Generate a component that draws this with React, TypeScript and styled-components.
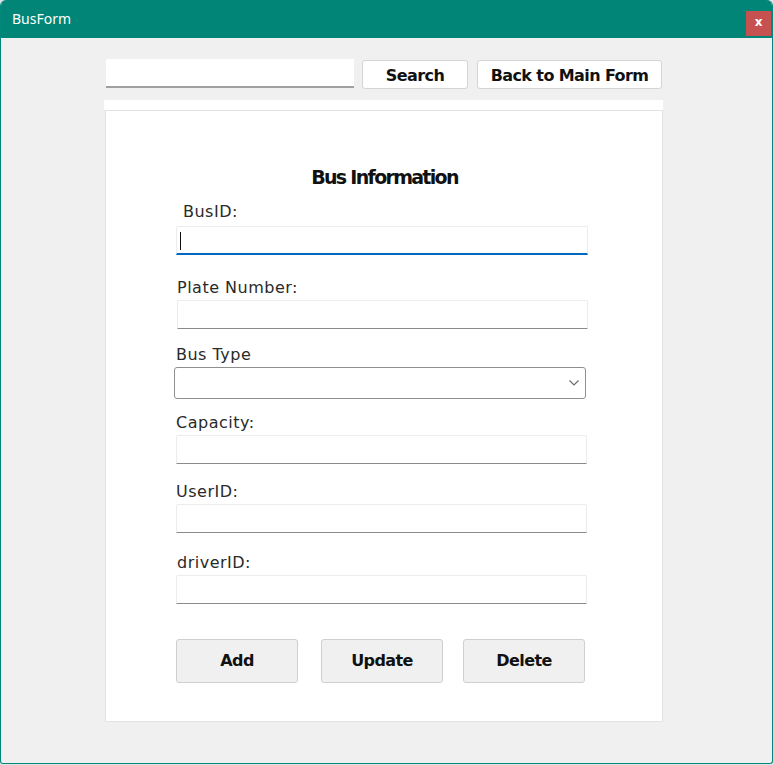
import React from "react";
import styled, { createGlobalStyle } from "styled-components";

const Global = createGlobalStyle`
  html, body { margin: 0; padding: 0; background: #dfe3e6; }
  body { width: 773px; height: 765px; overflow: hidden; }
  * { box-sizing: border-box; }
`;

const Window = styled.div`
  width: 773px;
  height: 764px;
  display: flex;
  flex-direction: column;
  background: #f0f0f0;
  border: 1px solid #00897a;
  border-top: none;
  border-radius: 6px 6px 3px 3px;
  overflow: hidden;
`;

const TitleBar = styled.div`
  height: 38px;
  flex: none;
  background: #008576;
  display: flex;
  align-items: center;
  justify-content: space-between;
  padding: 0 1px 0 11px;
`;

const Title = styled.span`
  color: #ffffff;
  font-family: "Noto Sans", sans-serif;
  font-size: 14px;
  margin-top: -1px;
`;

const CloseButton = styled.button`
  width: 25px;
  height: 25px;
  margin-top: 8px;
  background: #c75050;
  border: none;
  color: #ffffff;
  font-family: "DejaVu Sans", sans-serif;
  font-size: 12px;
  font-weight: bold;
  padding: 0 0 2px 0;
  display: flex;
  align-items: center;
  justify-content: center;
`;

const Body = styled.div`
  flex: 1;
  padding: 21px 0 0 103px;
  display: flex;
  flex-direction: column;
`;

const Toolbar = styled.div`
  display: flex;
  align-items: flex-start;
  height: 29px;
  padding-left: 2px;
`;

const SearchInput = styled.input`
  width: 248px;
  height: 29px;
  background: #ffffff;
  border: none;
  border-bottom: 2px solid #a0a0a0;
  outline: none;
  margin-right: 8px;
`;

const ToolButton = styled.button<{ $w: number; $gap?: number }>`
  width: ${(p) => p.$w}px;
  height: 29px;
  margin-top: 1px;
  margin-right: ${(p) => p.$gap ?? 0}px;
  background: #ffffff;
  border: 1px solid #d4d4d4;
  border-radius: 3px;
  font-family: "DejaVu Sans", sans-serif;
  font-weight: bold;
  font-size: 16px;
  letter-spacing: -0.6px;
  color: #111111;
  padding: 1px 0 0 0;
  display: flex;
  align-items: center;
  justify-content: center;
`;

const Strip = styled.div`
  width: 559px;
  height: 10px;
  margin-top: 12px;
  background: #ffffff;
`;

const Panel = styled.div`
  width: 558px;
  height: 612px;
  margin-left: 1px;
  background: #ffffff;
  border: 1px solid #e3e3e3;
  display: flex;
  flex-direction: column;
  padding: 54px 0 0 69px;
`;

const Heading = styled.h2`
  margin: 0 0 0 4px;
  width: 411px;
  text-align: center;
  font-family: "DejaVu Sans", sans-serif;
  font-weight: bold;
  font-size: 19px;
  letter-spacing: -1.7px;
  color: #111111;
  line-height: 24px;
`;

const Field = styled.div<{ $top: number }>`
  display: flex;
  flex-direction: column;
  margin-top: ${(p) => p.$top}px;
`;

const Label = styled.label<{ $indent: number; $gap: number }>`
  font-family: "DejaVu Sans", sans-serif;
  font-size: 16px;
  letter-spacing: 0.5px;
  line-height: 19px;
  color: #2a2a2a;
  padding-left: ${(p) => p.$indent}px;
  margin-bottom: ${(p) => p.$gap}px;
`;

const TextBox = styled.div<{ $focused?: boolean; $h: number; $x: number; $w: number }>`
  position: relative;
  width: ${(p) => p.$w}px;
  height: ${(p) => p.$h}px;
  margin-left: ${(p) => p.$x}px;
  background: #ffffff;
  border: 1px solid #ececec;
  border-bottom: ${(p) => (p.$focused ? "2px solid #0067c0" : "1px solid #8a8a8a")};
  border-radius: 2px 2px 0 0;
`;

const Caret = styled.span`
  position: absolute;
  left: 3px;
  top: 5px;
  width: 1px;
  height: 18px;
  background: #111111;
`;

const SelectBox = styled.div`
  width: 412px;
  height: 32px;
  margin-left: -1px;
  background: #ffffff;
  border: 1px solid #8f8f8f;
  border-radius: 3px;
  display: flex;
  align-items: center;
  justify-content: flex-end;
  padding-right: 5px;
`;

const ButtonRow = styled.div`
  display: flex;
  margin-top: 35px;
  margin-left: 1px;
`;

const ActionButton = styled.button<{ $gap: number }>`
  width: 122px;
  height: 44px;
  margin-right: ${(p) => p.$gap}px;
  background: #f0f0f0;
  border: 1px solid #cfcfcf;
  border-radius: 3px;
  font-family: "DejaVu Sans", sans-serif;
  font-weight: bold;
  font-size: 16px;
  letter-spacing: -0.6px;
  color: #111111;
  padding: 0 0 2px 0;
`;

type FieldDef = {
  label: string;
  top: number;
  indent: number;
  gap: number;
  h: number;
  x: number;
  w: number;
  focused?: boolean;
  select?: boolean;
};

const fields: FieldDef[] = [
  { label: "BusID:", top: 13, indent: 8, gap: 5, h: 29, x: 1, w: 412, focused: true },
  { label: "Plate Number:", top: 23, indent: 2, gap: 3, h: 29, x: 2, w: 411 },
  { label: "Bus Type", top: 16, indent: 1, gap: 3, h: 32, x: 0, w: 412, select: true },
  { label: "Capacity:", top: 14, indent: 1, gap: 3, h: 29, x: 1, w: 411 },
  { label: "UserID:", top: 18, indent: 1, gap: 3, h: 29, x: 1, w: 411 },
  { label: "driverID:", top: 20, indent: 2, gap: 3, h: 29, x: 1, w: 411 },
];

const Chevron = () => (
  <svg width="12" height="8" viewBox="0 0 12 8">
    <path d="M1.5 1.5 L6 6 L10.5 1.5" fill="none" stroke="#6b6b6b" strokeWidth="1.2" />
  </svg>
);

export default function App() {
  return (
    <>
      <Global />
      <Window>
        <TitleBar>
          <Title>BusForm</Title>
          <CloseButton>x</CloseButton>
        </TitleBar>
        <Body>
          <Toolbar>
            <SearchInput />
            <ToolButton $w={106} $gap={9}>Search</ToolButton>
            <ToolButton $w={185}>Back to Main Form</ToolButton>
          </Toolbar>
          <Strip />
          <Panel>
            <Heading>Bus Information</Heading>
            {fields.map((f) => (
              <Field key={f.label} $top={f.top}>
                <Label $indent={f.indent} $gap={f.gap}>{f.label}</Label>
                {f.select ? (
                  <SelectBox>
                    <Chevron />
                  </SelectBox>
                ) : (
                  <TextBox $h={f.h} $x={f.x} $w={f.w} $focused={f.focused}>
                    {f.focused && <Caret />}
                  </TextBox>
                )}
              </Field>
            ))}
            <ButtonRow>
              <ActionButton $gap={23}>Add</ActionButton>
              <ActionButton $gap={20}>Update</ActionButton>
              <ActionButton $gap={0}>Delete</ActionButton>
            </ButtonRow>
          </Panel>
        </Body>
      </Window>
    </>
  );
}
